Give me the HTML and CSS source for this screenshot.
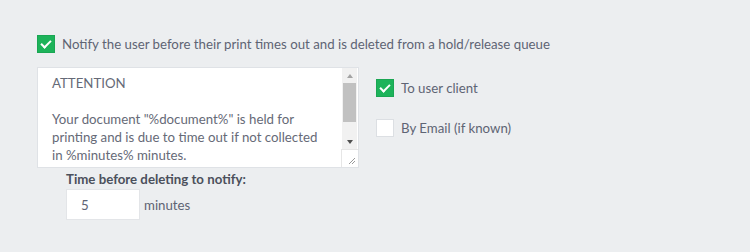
FILE: index.html
```html
<!DOCTYPE html>
<html lang="en">
<head>
    <meta charset="UTF-8">
    <title>Hold/release notification</title>
    <link rel="stylesheet" href="styles.css">
</head>
<body>
    <div class="panel">
        <label class="check main-check">
            <span class="box checked"></span>
            <span class="check-text">Notify the user before their print times out and is deleted from a hold/release queue</span>
        </label>

        <div class="message-row">
            <!-- Message box with its own scrollbar strip -->
            <div class="message">
                <div class="message-text">
                    <div>ATTENTION</div>
                    <div>&nbsp;</div>
                    <div>Your document "%document%" is held for</div>
                    <div>printing and is due to time out if not collected</div>
                    <div>in %minutes% minutes.</div>
                </div>
                <div class="scrollbar">
                    <div class="scroll-btn"><span class="arrow up"></span></div>
                    <div class="scroll-track">
                        <div class="scroll-thumb"></div>
                    </div>
                    <div class="scroll-btn"><span class="arrow down"></span></div>
                    <div class="resize-corner">
                        <svg width="8" height="8" viewBox="0 0 8 8">
                            <path d="M7 1 L1 7 M7 4 L4 7" stroke="#9a9a9a" stroke-width="1" fill="none"/>
                        </svg>
                    </div>
                </div>
            </div>

            <div class="targets">
                <label class="check">
                    <span class="box checked"></span>
                    <span class="check-text">To user client</span>
                </label>
                <label class="check">
                    <span class="box"></span>
                    <span class="check-text">By Email (if known)</span>
                </label>
            </div>
        </div>

        <div class="timeout">
            <div class="timeout-label">Time before deleting to notify:</div>
            <div class="timeout-row">
                <input class="minutes-input" type="text" value="5">
                <span class="unit">minutes</span>
            </div>
        </div>
    </div>
</body>
</html>
```

FILE: styles.css
```css
body, html {
    margin: 0;
    padding: 0;
    background-color: #eceef0;
    font-family: 'Lato', 'Noto Sans', sans-serif;
    font-size: 13.25px;
    color: #5e6474;
}

.panel {
    padding: 35px 0 0 37px;
}

/* Checkbox rows */
.check {
    display: flex;
    align-items: center;
    gap: 7px;
    height: 18px;
}

.box {
    width: 18px;
    height: 18px;
    box-sizing: border-box;
    background: #fff;
    border: 1px solid #dcdfe3;
    flex-shrink: 0;
    position: relative;
}

.box.checked {
    background: #1db35a;
    border-color: #1aa653;
}

/* Tick mark */
.box.checked::after {
    content: '';
    position: absolute;
    left: 5px;
    top: 2px;
    width: 4px;
    height: 8px;
    border: solid #fff;
    border-width: 0 2px 2px 0;
    transform: rotate(45deg);
}

.check-text {
    line-height: 18px;
    white-space: nowrap;
}

.message-row {
    display: flex;
    margin-top: 14px;
}

.message {
    display: flex;
    width: 322px;
    height: 101px;
    box-sizing: border-box;
    border: 1px solid #dfe2e6;
    background: #fff;
}

.message-text {
    flex: 1;
    padding: 6px 14px 0 14px;
    line-height: 18px;
    color: #666a77;
    white-space: nowrap;
    overflow: hidden;
}

/* Fake classic scrollbar */
.scrollbar {
    width: 15px;
    margin-right: 1px;
    display: flex;
    flex-direction: column;
    background: #f1f1f1;
}

.scroll-btn {
    height: 15px;
    display: flex;
    align-items: center;
    justify-content: center;
}

.arrow {
    width: 0;
    height: 0;
    border-left: 3.5px solid transparent;
    border-right: 3.5px solid transparent;
}

.arrow.up {
    border-bottom: 4px solid #a3a3a3;
}

.arrow.down {
    border-top: 4px solid #505050;
}

.scroll-track {
    flex: 1;
    padding: 0 1px;
}

.scroll-thumb {
    height: 39px;
    background: #c1c1c1;
}

.resize-corner {
    height: 15px;
    margin-left: -1px;
    margin-right: -1px;
    background: #fff;
    border-top: 1px solid #e6e6e6;
    border-left: 1px solid #e6e6e6;
    display: flex;
    align-items: flex-end;
    justify-content: flex-end;
    padding: 0 2px 2px 0;
}

.targets {
    display: flex;
    flex-direction: column;
    gap: 22px;
    margin: 12px 0 0 17px;
}

.timeout {
    margin: 2px 0 0 29px;
}

.timeout-label {
    font-weight: bold;
    color: #4b505c;
    line-height: 18px;
}

.timeout-row {
    display: flex;
    align-items: center;
    gap: 4px;
    margin-top: 1px;
}

.minutes-input {
    width: 74px;
    height: 31px;
    box-sizing: border-box;
    border: 1px solid #e3e5e8;
    padding: 0 14px;
    font-family: inherit;
    font-size: 13.25px;
    color: #5e6474;
    background: #fff;
    outline: none;
}

.unit {
    line-height: 18px;
}
```
